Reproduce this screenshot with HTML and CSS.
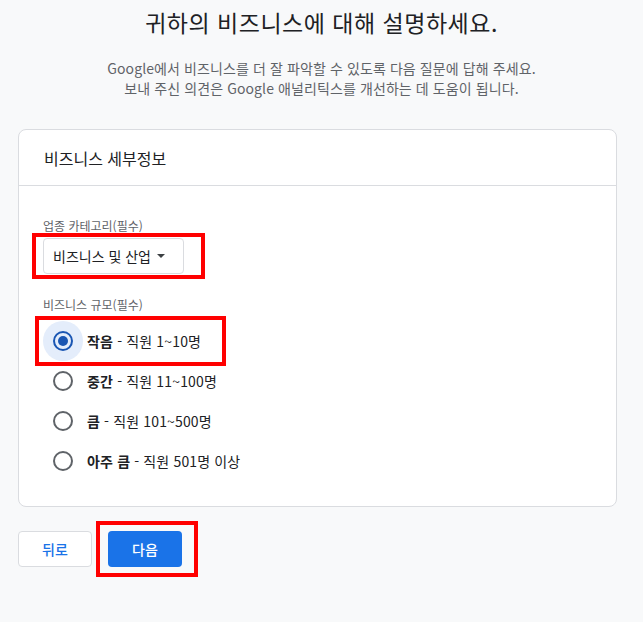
FILE: index.html
```html
<!DOCTYPE html>
<html lang="ko">
<head>
<meta charset="utf-8">
<link rel="stylesheet" href="styles.css">
</head>
<body>
<div class="page">
  <h1 class="title">귀하의 비즈니스에 대해 설명하세요.</h1>
  <p class="subtitle">Google에서 비즈니스를 더 잘 파악할 수 있도록 다음 질문에 답해 주세요.<br>보내 주신 의견은 Google 애널리틱스를 개선하는 데 도움이 됩니다.</p>

  <section class="card">
    <div class="card-head">비즈니스 세부정보</div>
    <div class="card-body">
      <div class="field-label">업종 카테고리(필수)</div>
      <div class="select mark-select">
        <span>비즈니스 및 산업</span>
        <span class="caret"></span>
      </div>

      <div class="field-label second">비즈니스 규모(필수)</div>
      <div class="radios">
        <label class="radio mark-radio">
          <span class="halo checked"><span class="ring on"><span class="dot"></span></span></span>
          <span class="rtext"><b>작음</b> - 직원 1~10명</span>
        </label>
        <label class="radio">
          <span class="halo"><span class="ring"></span></span>
          <span class="rtext"><b>중간</b> - 직원 11~100명</span>
        </label>
        <label class="radio">
          <span class="halo"><span class="ring"></span></span>
          <span class="rtext"><b>큼</b> - 직원 101~500명</span>
        </label>
        <label class="radio">
          <span class="halo"><span class="ring"></span></span>
          <span class="rtext"><b>아주 큼</b> - 직원 501명 이상</span>
        </label>
      </div>
    </div>
  </section>

  <div class="actions">
    <button class="btn back">뒤로</button>
    <button class="btn next mark-next">다음</button>
  </div>
</div>
</body>
</html>
```

FILE: styles.css
```css
* { box-sizing: border-box; }
html, body {
  margin: 0;
  padding: 0;
  background: #f8f9fa;
  font-family: "Noto Sans CJK KR", "Noto Sans", Roboto, sans-serif;
  color: #202124;
}
.page {
  width: 643px;
  height: 622px;
  overflow: hidden;
  padding-top: 8px;
}
.title {
  margin: 0;
  text-align: center;
  font-size: 23px;
  line-height: 28px;
  font-weight: 400;
  letter-spacing: 0.5px;
  color: #202124;
}
.subtitle {
  margin: 22px 0 0;
  text-align: center;
  font-size: 14px;
  line-height: 20px;
  color: #5f6368;
  letter-spacing: 0.1px;
}
.card {
  margin: 31px 0 0 18px;
  width: 599px;
  height: 378px;
  background: #fff;
  border: 1px solid #dadce0;
  border-radius: 8px;
}
.card-head {
  height: 56px;
  padding-left: 25px;
  display: flex;
  align-items: center;
  font-size: 16px;
  border-bottom: 1px solid #dadce0;
  color: #202124;
}
.card-body {
  padding: 32px 0 0 24px;
}
.field-label {
  font-size: 12px;
  line-height: 16px;
  color: #5f6368;
}
.field-label.second {
  margin-top: 23px;
}
.select {
  position: relative;
  margin-top: 4px;
  width: 141px;
  height: 36px;
  border: 1px solid #dadce0;
  border-radius: 4px;
  display: flex;
  align-items: center;
  padding-left: 9px;
  font-size: 14px;
  color: #202124;
}
.caret {
  margin-left: 6px;
  width: 0;
  height: 0;
  border-left: 4px solid transparent;
  border-right: 4px solid transparent;
  border-top: 4px solid #3c4043;
}
.mark-select::after {
  content: "";
  position: absolute;
  top: -6px;
  bottom: -6px;
  left: -12px;
  right: -22px;
  border: 4px solid #ff0000;
}
.radios {
  margin-top: 8px;
}
.radio {
  position: relative;
  display: flex;
  align-items: center;
  width: fit-content;
  height: 40px;
  font-size: 14px;
  letter-spacing: 0.15px;
  color: #202124;
}
.halo {
  width: 40px;
  height: 40px;
  border-radius: 50%;
  display: flex;
  align-items: center;
  justify-content: center;
}
.halo.checked {
  background: #e4edfb;
}
.ring {
  width: 20px;
  height: 20px;
  border-radius: 50%;
  border: 2px solid #5f6368;
  display: flex;
  align-items: center;
  justify-content: center;
}
.ring.on {
  border-color: #1a56b3;
}
.dot {
  width: 10px;
  height: 10px;
  border-radius: 50%;
  background: #1a56b3;
}
.rtext {
  margin-left: 4px;
}
.rtext b {
  font-weight: 700;
}
.mark-radio {
  padding-right: 21px;
}
.mark-radio::after {
  content: "";
  position: absolute;
  top: -5px;
  bottom: -5px;
  left: -8px;
  right: -4px;
  border: 4px solid #ff0000;
}
.actions {
  margin: 24px 0 0 18px;
  display: flex;
  gap: 16px;
}
.btn {
  position: relative;
  width: 74px;
  height: 36px;
  border-radius: 4px;
  font-family: "Noto Sans CJK KR", "Noto Sans", Roboto, sans-serif;
  font-size: 14px;
  font-weight: 500;
  padding: 0;
}
.back {
  background: #fff;
  border: 1px solid #dadce0;
  color: #1a73e8;
}
.next {
  background: #1a73e8;
  border: none;
  color: #fff;
}
.mark-next::after {
  content: "";
  position: absolute;
  top: -10px;
  bottom: -10px;
  left: -12px;
  right: -16px;
  border: 4px solid #ff0000;
}
```
